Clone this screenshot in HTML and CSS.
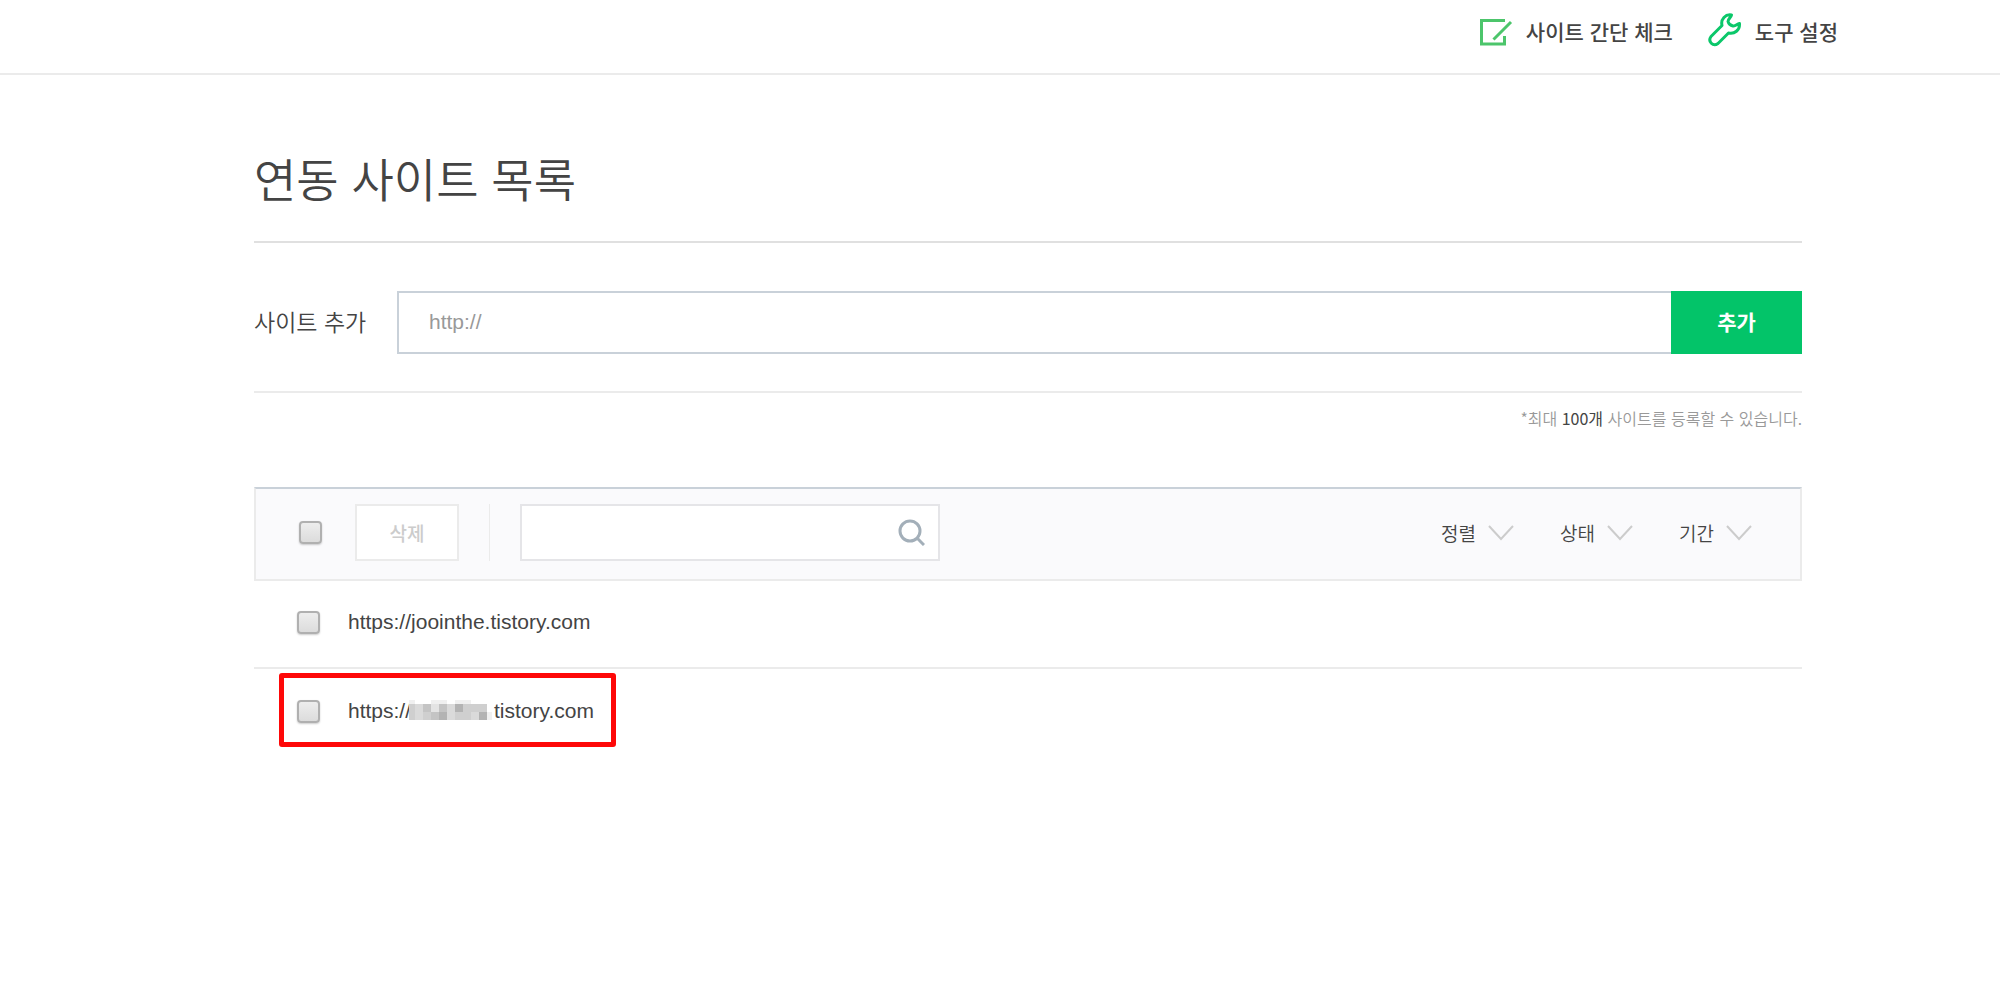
FILE: index.html
```html
<!DOCTYPE html>
<html lang="ko">
<head>
    <meta charset="UTF-8">
    <meta name="viewport" content="width=device-width, initial-scale=1.0">
    <title>연동 사이트 목록</title>
    <link rel="stylesheet" href="styles.css">
</head>
<body>
    <header class="header">
        <nav class="header-menu">
            <a href="#">
                <svg width="34" height="28" viewBox="0 0 34 28" fill="none" stroke="#4cc56b" stroke-width="3">
                    <path d="M26 2.500H2.500V26H25.500V18"/>
                    <path d="M14.500 21.500L32 4"/>
                </svg>
                <span>사이트 간단 체크</span>
            </a>
            <a href="#">
                <svg class="tool-icon" width="34" height="34" viewBox="0 0 34 34" fill="none" stroke="#0bc76a" stroke-width="3" stroke-linejoin="round">
                    <path d="M23.500 2C17.500 1 12.500 6 14 12.500L3 23.500C-0.500 28.500 5 34 10 30.500L20.500 20C26.500 21.500 32 17 31.500 10.500C29 11 27.500 13.500 25 13C22.500 12.500 20.500 10.500 20 8.500C20 6 23 4.500 23.500 2Z"/>
                </svg>
                <span>도구 설정</span>
            </a>
        </nav>
    </header>

    <main class="container">
        <h1>연동 사이트 목록</h1>

        <form class="add-form">
            <label for="siteUrl">사이트 추가</label>
            <input type="text" id="siteUrl" placeholder="http://">
            <button type="button">추가</button>
        </form>
        <p class="notice">*최대 <strong>100개</strong> 사이트를 등록할 수 있습니다.</p>

        <div class="toolbar">
            <input type="checkbox" class="checkbox" aria-label="전체 선택">
            <button type="button" class="delete-btn">삭제</button>
            <span class="divider"></span>
            <div class="search-box">
                <input type="text" aria-label="사이트 검색">
                <button type="button" aria-label="검색">
                    <svg width="28" height="28" viewBox="0 0 28 28" fill="none" stroke="#a3afb9" stroke-width="3">
                        <circle cx="13" cy="13" r="10"/>
                        <path d="M20 20L27 27"/>
                    </svg>
                </button>
            </div>
            <div class="filters">
                <div class="filter">
                    <select aria-label="정렬"><option>정렬</option></select>
                    <svg width="26" height="16" viewBox="0 0 26 16" fill="none" stroke="#cccccc" stroke-width="2"><path d="M1 1L13 14L25 1"/></svg>
                </div>
                <div class="filter">
                    <select aria-label="상태"><option>상태</option></select>
                    <svg width="26" height="16" viewBox="0 0 26 16" fill="none" stroke="#cccccc" stroke-width="2"><path d="M1 1L13 14L25 1"/></svg>
                </div>
                <div class="filter">
                    <select aria-label="기간"><option>기간</option></select>
                    <svg width="26" height="16" viewBox="0 0 26 16" fill="none" stroke="#cccccc" stroke-width="2"><path d="M1 1L13 14L25 1"/></svg>
                </div>
            </div>
        </div>

        <ul class="site-list">
            <li>
                <input type="checkbox" class="checkbox" aria-label="사이트 선택">
                <a href="#">https://joointhe.tistory.com</a>
            </li>
            <li class="marked">
                <input type="checkbox" class="checkbox" aria-label="사이트 선택">
                <a href="#">https://<svg class="mosaic" width="85" height="20" viewBox="0 0 85 20" shape-rendering="crispEdges">
                    <path fill="#f0f0f0" d="M0 0H6V4H0zM22 0H38V4H22zM46 0H62V4H46zM78 12H83V20H78z"/>
                    <path fill="#cfcfcf" d="M0 4H78V20H0z"/>
                    <path fill="#dadada" d="M6 4H14V20H6zM38 4H46V20H38zM62 12H70V20H62z"/>
                    <path fill="#e4e4e4" d="M22 4H30V12H22z"/>
                    <path fill="#c4c4c4" d="M14 4H22V12H14zM30 4H38V12H30zM22 12H30V20H22z"/>
                    <path fill="#b3b3b3" d="M30 12H38V20H30zM46 4H54V12H46zM70 12H78V20H70z"/>
                </svg>tistory.com</a>
            </li>
        </ul>
    </main>
</body>
</html>
```

FILE: styles.css
```css
* {
    margin: 0;
    padding: 0;
    box-sizing: border-box;
}

body {
    background: #fff;
    color: #444;
    font-family: 'Noto Sans CJK KR', sans-serif;
    font-weight: 350;
}

a {
    color: inherit;
    text-decoration: none;
}

input,
button,
select {
    font-family: inherit;
    font-weight: inherit;
    border: none;
    border-radius: 0;
    outline: none;
}

button {
    cursor: pointer;
}

.header {
    height: 75px;
    padding-right: 162px;
    border-bottom: 2px solid #ebebeb;
}

.header-menu {
    display: flex;
    justify-content: flex-end;
    gap: 35px;
    height: 64px;
}

.header-menu a {
    display: flex;
    align-items: center;
    gap: 13px;
    font-size: 21px;
    font-weight: 500;
    line-height: 30px;
}

.header-menu span {
    padding-bottom: 2px;
}

.header-menu .tool-icon {
    margin-bottom: 4px;
}

.container {
    padding: 0 198px 0 254px;
}

h1 {
    height: 168px;
    padding-top: 67px;
    border-bottom: 2px solid #e0e0e0;
    font-size: 46px;
    font-weight: 350;
    line-height: 70px;
}

.add-form {
    display: flex;
    align-items: center;
    padding: 48px 0 37px;
    border-bottom: 2px solid #ebebeb;
}

.add-form label {
    width: 143px;
    padding-bottom: 3px;
    font-size: 23px;
}

.add-form input {
    flex: 1;
    height: 63px;
    padding: 0 30px 2px;
    border: 2px solid #c9d1d9;
    border-right: none;
    color: #444;
    font-family: 'Liberation Sans', sans-serif;
    font-size: 21px;
}

.add-form input::placeholder {
    color: #999;
}

.add-form button {
    width: 131px;
    height: 63px;
    padding-bottom: 3px;
    background: #03c469;
    color: #fff;
    font-size: 21px;
    font-weight: 700;
}

.notice {
    padding: 13px 0 57px;
    color: #999;
    font-size: 16px;
    line-height: 24px;
    text-align: right;
}

.notice strong {
    color: #444;
    font-weight: 400;
}

.toolbar {
    display: flex;
    align-items: center;
    height: 94px;
    padding: 0 48px 4px 43px;
    border: 2px solid #ebebeb;
    border-top-color: #c9d1d9;
    background: #fafafc;
}

.checkbox {
    appearance: none;
    width: 23px;
    height: 23px;
    border: 2px solid #b0b0b0;
    border-radius: 4px;
    background: linear-gradient(#ededed, #dcdcdc);
    box-shadow: 0 1px 2px rgba(0, 0, 0, 0.2);
}

.delete-btn {
    width: 104px;
    height: 57px;
    margin-left: 33px;
    border: 2px solid #ebebeb;
    background: #fff;
    color: #ccc;
    font-size: 19px;
    font-weight: 500;
}

.divider {
    width: 1px;
    height: 57px;
    margin: 0 30px;
    background: #ebebeb;
}

.search-box {
    display: flex;
    width: 420px;
    height: 57px;
    border: 2px solid #e5e5e8;
    background: #fff;
}

.search-box input {
    flex: 1;
    min-width: 0;
    padding: 0 14px;
    font-size: 18px;
}

.search-box button {
    display: flex;
    align-items: center;
    justify-content: center;
    width: 54px;
    background: none;
}

.filters {
    display: flex;
    gap: 46px;
    margin-left: auto;
}

.filter {
    position: relative;
    width: 73px;
}

.filter select {
    appearance: none;
    width: 100%;
    padding-top: 2px;
    background: none;
    color: #444;
    font-size: 19px;
    line-height: 30px;
}

.filter svg {
    position: absolute;
    top: 9px;
    right: 0;
    pointer-events: none;
}

.site-list {
    list-style: none;
}

.site-list li {
    position: relative;
    display: flex;
    align-items: center;
    gap: 28px;
    height: 88px;
    padding: 0 0 4px 43px;
    border-bottom: 2px solid #ebebeb;
    font-family: 'Liberation Sans', sans-serif;
    font-size: 21px;
}

.site-list li:last-child {
    border-bottom: none;
}

/* highlight frame over the row */
.site-list .marked::after {
    content: '';
    position: absolute;
    top: 4px;
    left: 25px;
    width: 337px;
    height: 74px;
    box-sizing: border-box;
    border: 5px solid #fe0808;
    border-radius: 3px;
    pointer-events: none;
}

.mosaic {
    margin-left: -2px;
    vertical-align: -2px;
}
```
